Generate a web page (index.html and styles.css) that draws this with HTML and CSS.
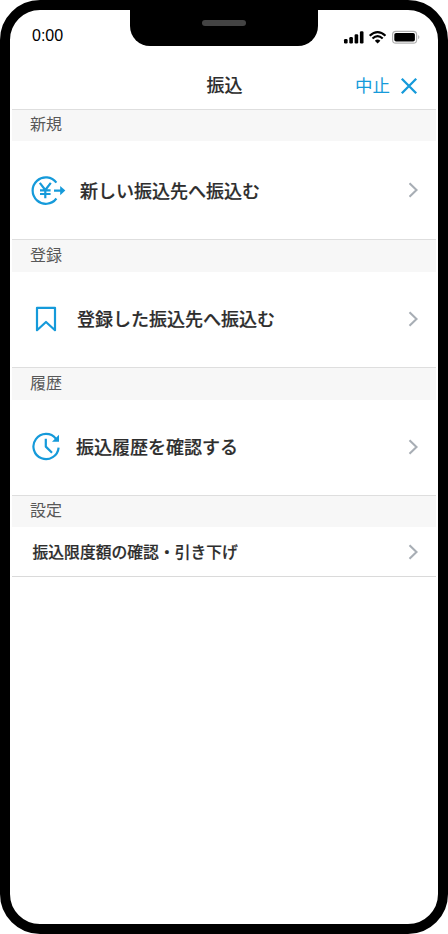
FILE: index.html
```html
<!DOCTYPE html>
<html lang="ja">
<head>
<meta charset="utf-8">
<title>振込</title>
<link rel="stylesheet" href="styles.css">
</head>
<body>
<div class="phone">
  <div class="notch"><span class="speaker"></span></div>
  <div class="status">
    <span class="time">0:00</span>
    <svg class="status-icons" width="78" height="16" viewBox="0 0 78 16">
      <rect x="1" y="10" width="3.6" height="4.4" rx="1.2"/>
      <rect x="6.3" y="8" width="3.6" height="6.4" rx="1.2"/>
      <rect x="11.6" y="5.2" width="3.6" height="9.2" rx="1.2"/>
      <rect x="16.9" y="2.3" width="3.6" height="12.1" rx="1.2"/>
      <path d="M26.7 6.7Q34.6 -.6 42.5 6.7M29.5 9.5Q34.6 4.8 39.7 9.5" fill="none" stroke="#000" stroke-width="2.2"/>
      <path d="M31.8 11.7Q34.6 9.4 37.4 11.7L34.6 14.4Z"/>
      <rect x="49.6" y="2.4" width="24" height="11.7" rx="3.2" fill="#fff" stroke="#b2b2b2" stroke-width="1.2"/>
      <rect x="51.3" y="4" width="20.6" height="8.5" rx="1.8"/>
      <path d="M75.2 6.1Q77.6 8.2 75.2 10.3Z" fill="#b2b2b2"/>
    </svg>
  </div>
  <header class="bar">
    <h1>振込</h1>
    <div class="cancel"><span>中止</span>
      <svg width="18" height="18" viewBox="0 0 18 18"><path d="M1.8 1.8L16.2 16.2M16.2 1.8L1.8 16.2"/></svg>
    </div>
  </header>
  <main>
    <h2 class="compact">新規</h2>
    <div class="row first">
      <svg class="icon" width="36" height="32" viewBox="0 0 36 32">
        <path d="M26.4 7.7A13.2 13.2 0 1 0 26.4 23.5"/>
        <path d="M9.8 7.8L15.3 15L20.8 7.8M15.3 15V23.2M10 15.4H20.6M10 19H20.6" stroke-width="2.1"/>
        <path d="M24 15.6H31"/><path class="solid" d="M30.2 11L35.3 15.6L30.2 20.2Z"/>
      </svg>
      <span>新しい振込先へ振込む</span>
      <svg class="chevron" width="12" height="16" viewBox="0 0 12 16"><path d="M1.5 1.2L8.5 8L1.5 14.8"/></svg>
    </div>
    <h2>登録</h2>
    <div class="row second">
      <svg class="icon" width="24" height="28" viewBox="0 0 24 28"><path d="M3 2.8H21V25.2L12 17L3 25.2Z"/></svg>
      <span>登録した振込先へ振込む</span>
      <svg class="chevron" width="12" height="16" viewBox="0 0 12 16"><path d="M1.5 1.2L8.5 8L1.5 14.8"/></svg>
    </div>
    <h2>履歴</h2>
    <div class="row third">
      <svg class="icon" width="30" height="30" viewBox="0 0 30 30">
        <path d="M25 6.8A12.6 12.6 0 1 0 27.6 15.6M14.8 6.8V14.6L21 20.8"/><path class="solid" d="M28 2.7V9.7H21Z"/>
      </svg>
      <span>振込履歴を確認する</span>
      <svg class="chevron" width="12" height="16" viewBox="0 0 12 16"><path d="M1.5 1.2L8.5 8L1.5 14.8"/></svg>
    </div>
    <h2 class="compact">設定</h2>
    <div class="row small">
      <span>振込限度額の確認・引き下げ</span>
      <svg class="chevron" width="12" height="16" viewBox="0 0 12 16"><path d="M1.5 1.2L8.5 8L1.5 14.8"/></svg>
    </div>
  </main>
</div>
</body>
</html>
```
FILE: styles.css
```css
* { box-sizing: border-box; }
body { margin: 0; background: #fff; font-family: "Noto Sans CJK JP", sans-serif; color: #2d2d2d; }
svg { display: block; flex: none; }
h1, h2 { margin: 0; }
.phone { position: relative; width: 448px; height: 934px; border: 10px solid #000; border-radius: 40px; background: #fff; overflow: hidden; }
.notch { position: absolute; top: 0; left: 120px; width: 188px; height: 36px; padding-top: 10px; background: #000; border-radius: 0 0 20px 20px; }
.speaker { display: block; width: 44px; height: 6px; margin: 0 auto; border-radius: 3px; background: #434343; }
.status { display: flex; justify-content: space-between; height: 52px; padding: 16px 17px 0 22px; }
.time { font: 16px/20px "Liberation Sans", sans-serif; color: #000; }
.status-icons { margin-top: 3px; }
.bar { display: grid; grid-template-columns: 1fr auto 1fr; align-items: center; height: 47px; padding: 0 20px 0 21px; }
h1 { grid-column: 2; padding-bottom: 2px; font-size: 18px; line-height: 27px; font-weight: 500; -webkit-text-stroke: .1px; }
.cancel { display: flex; justify-content: flex-end; align-items: center; gap: 10px; color: #159ada; font-size: 17.5px; line-height: 27px; font-weight: 400; }
.cancel span { padding-bottom: 2px; }
.cancel path { fill: none; stroke: #159ada; stroke-width: 2.3; }
main { margin: 0 2px; border-bottom: 1px solid #dadada; }
h2 { height: 33px; padding: 0 18px; border-top: 1px solid #dedede; background: #f7f7f7; color: #585858; font-size: 16px; line-height: 28px; font-weight: 400; }
.compact { height: 32px; line-height: 27px; }
.row { display: flex; align-items: center; height: 95px; padding-right: 16px; padding-bottom: 1px; font-size: 18px; line-height: 28px; font-weight: 500; -webkit-text-stroke: .2px; }
.row span { padding-bottom: 2px; }
.row .chevron { margin-left: auto; }
.first { height: 98px; padding-left: 18px; padding-bottom: 0; gap: 14px; }
.first .icon { margin-top: 1px; }
.second { padding-left: 22px; gap: 19px; }
.third { padding-left: 19px; gap: 15px; }
.small { height: 49px; padding-left: 20.5px; padding-bottom: 0; font-size: 15.8px; }
.first span, .small span { padding-bottom: 0; }
.icon path { fill: none; stroke: #159ada; stroke-width: 2.2; stroke-linejoin: round; }
.icon .solid { fill: #159ada; stroke: none; }
.chevron path { fill: none; stroke: #a8aeb5; stroke-width: 2.1; }
```
